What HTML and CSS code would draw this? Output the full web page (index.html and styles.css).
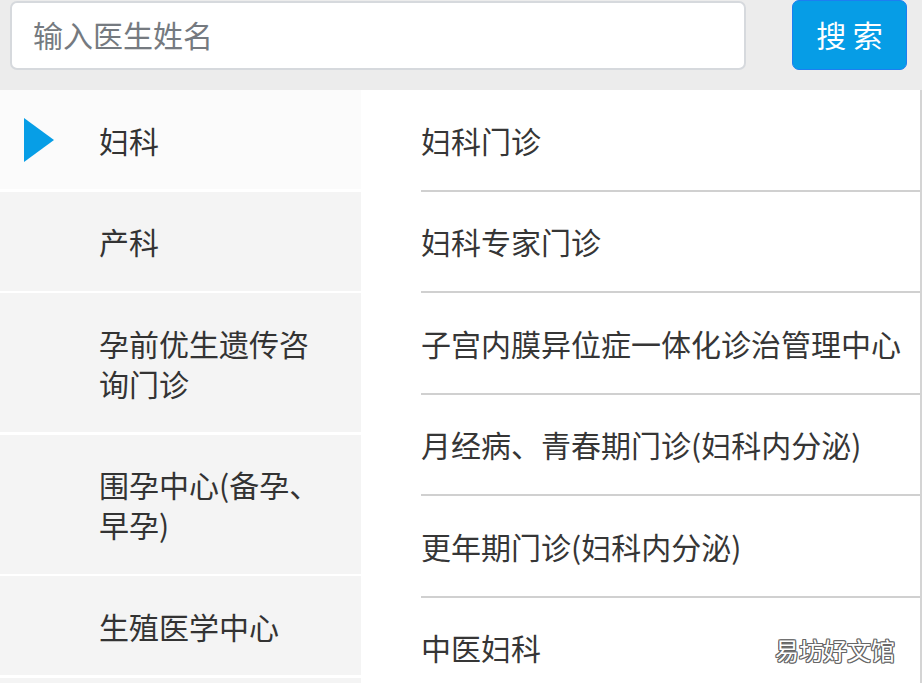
FILE: index.html
```html
<!DOCTYPE html>
<html lang="zh-CN">
<head>
<meta charset="utf-8">
<link rel="stylesheet" href="styles.css">
</head>
<body>
<div class="page">
  <div class="topbar">
    <div class="search-input">输入医生姓名</div>
    <div class="search-btn">搜 索</div>
  </div>
  <div class="main">
    <ul class="cats">
      <li class="cat active"><span class="arrow"></span>妇科</li>
      <li class="cat">产科</li>
      <li class="cat">孕前优生遗传咨询门诊</li>
      <li class="cat">围孕中心(备孕、早孕)</li>
      <li class="cat">生殖医学中心</li>
      <li class="cat cat-empty"></li>
    </ul>
    <ul class="subs">
      <li class="sub">妇科门诊</li>
      <li class="sub">妇科专家门诊</li>
      <li class="sub">子宫内膜异位症一体化诊治管理中心</li>
      <li class="sub">月经病、青春期门诊(妇科内分泌)</li>
      <li class="sub">更年期门诊(妇科内分泌)</li>
      <li class="sub">中医妇科</li>
    </ul>
  </div>
  <div class="watermark">易坊好文馆</div>
</div>
</body>
</html>
```

FILE: styles.css
```css
html, body {
  margin: 0;
  padding: 0;
  width: 922px;
  height: 683px;
  overflow: hidden;
  background: #ffffff;
  font-family: "Noto Sans CJK SC", "Noto Sans", sans-serif;
}
.page {
  position: relative;
  width: 922px;
  height: 683px;
  overflow: hidden;
}
.topbar {
  height: 90px;
  background: #ececec;
  display: flex;
  align-items: flex-start;
  box-sizing: border-box;
  padding-left: 10px;
}
.search-input {
  margin-top: 1px;
  width: 736px;
  height: 69px;
  box-sizing: border-box;
  background: #fff;
  border: 2px solid #d6d9dd;
  border-radius: 7px;
  padding-left: 21px;
  font-size: 30px;
  line-height: 63px;
  color: #757a80;
}
.search-btn {
  margin-left: 46px;
  width: 115px;
  height: 70px;
  box-sizing: border-box;
  background: #069de6;
  border: 1px solid #1c7ef2;
  border-radius: 7px;
  color: #fff;
  font-size: 30px;
  line-height: 66px;
  text-align: center;
}
.main {
  display: flex;
}
ul {
  list-style: none;
  margin: 0;
  padding: 0;
}
.cats {
  width: 361px;
  flex: none;
  background: #fff;
}
.cat {
  position: relative;
  background: #f4f4f4;
  margin-bottom: 2.5px;
  padding: 29.5px 40px 29.5px 99px;
  font-size: 30px;
  line-height: 40px;
  color: #333;
}
.cat-empty {
  height: 40px;
}
.cat.active {
  background: #fbfbfb;
}
.arrow {
  position: absolute;
  left: 24px;
  top: 28px;
  width: 0;
  height: 0;
  border-top: 22px solid transparent;
  border-bottom: 22px solid transparent;
  border-left: 30px solid #079ee6;
}
.subs {
  flex: 1;
  padding-left: 60px;
  border-right: 2px solid #d4d4d4;
}
.sub {
  height: 99.5px;
  border-bottom: 2px solid #d0d0d0;
  display: flex;
  align-items: center;
  font-size: 30px;
  color: #363636;
  white-space: nowrap;
}
.watermark {
  position: absolute;
  left: 775px;
  top: 634px;
  font-size: 24px;
  line-height: 32px;
  color: #fff;
  text-shadow:
    1px 0 0 #666, -1px 0 0 #666, 0 1px 0 #666, 0 -1px 0 #666,
    1px 1px 0 #666, -1px -1px 0 #666, 1px -1px 0 #666, -1px 1px 0 #666;
}
```
